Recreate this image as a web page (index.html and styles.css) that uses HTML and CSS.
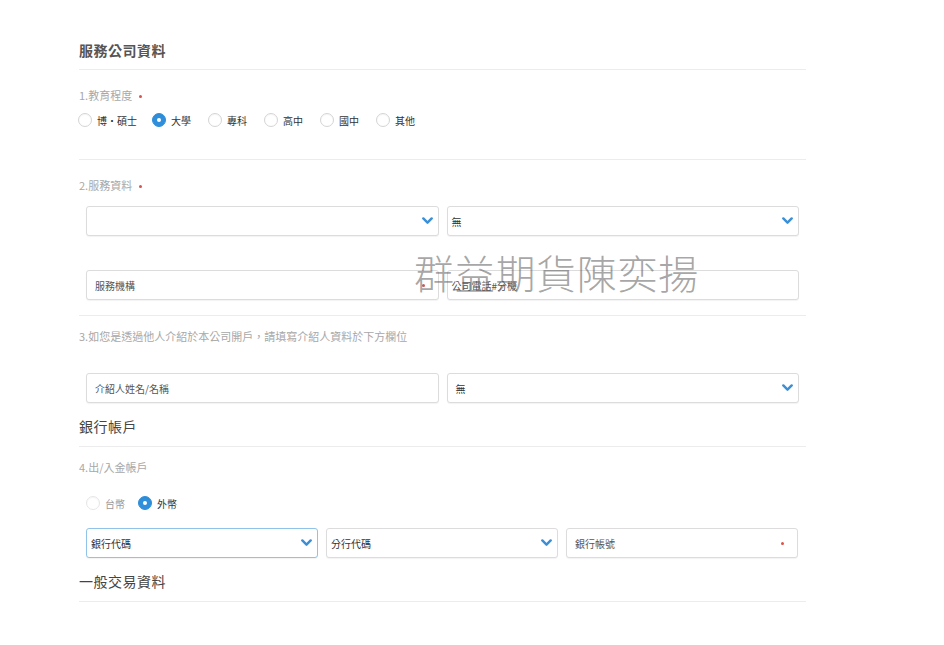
FILE: index.html
```html
<!DOCTYPE html>
<html lang="zh-Hant">
<head>
<meta charset="utf-8">
<link rel="stylesheet" href="styles.css">
</head>
<body>
<div class="page">
  <h2 class="section-title first">服務公司資料</h2>

  <div class="q q1">1.教育程度 <span class="req"></span></div>
  <div class="radios r1">
    <label class="radio"><span class="dot"></span>博・碩士</label>
    <label class="radio"><span class="dot on"></span>大學</label>
    <label class="radio"><span class="dot"></span>專科</label>
    <label class="radio"><span class="dot"></span>高中</label>
    <label class="radio"><span class="dot"></span>國中</label>
    <label class="radio"><span class="dot"></span>其他</label>
  </div>
  <div class="divider d1"></div>

  <div class="q q2">2.服務資料 <span class="req"></span></div>
  <div class="row two r-a">
    <div class="field select"><span class="val"></span><svg class="chev" viewBox="0 0 10 7"><path d="M1.2 1.2 L5 5 L8.8 1.2"/></svg></div>
    <div class="field select"><span class="val dark">無</span><svg class="chev" viewBox="0 0 10 7"><path d="M1.2 1.2 L5 5 L8.8 1.2"/></svg></div>
  </div>
  <div class="row two r-b">
    <div class="field input"><span class="ph pad">服務機構</span><span class="rdot"></span></div>
    <div class="field input"><span class="ph">公司電話#分機</span></div>
  </div>
  <div class="divider d2"></div>

  <div class="q q3">3.如您是透過他人介紹於本公司開戶，請填寫介紹人資料於下方欄位</div>
  <div class="row two r-c">
    <div class="field input"><span class="ph pad">介紹人姓名/名稱</span></div>
    <div class="field select"><span class="val dark pad">無</span><svg class="chev" viewBox="0 0 10 7"><path d="M1.2 1.2 L5 5 L8.8 1.2"/></svg></div>
  </div>

  <h2 class="section-title">銀行帳戶</h2>
  <div class="q q4">4.出/入金帳戶</div>
  <div class="radios r2">
    <label class="radio muted"><span class="dot faint"></span>台幣</label>
    <label class="radio"><span class="dot on"></span>外幣</label>
  </div>
  <div class="row three r-d">
    <div class="field select focus"><span class="val dark">銀行代碼</span><svg class="chev" viewBox="0 0 10 7"><path d="M1.2 1.2 L5 5 L8.8 1.2"/></svg></div>
    <div class="field select"><span class="val dark">分行代碼</span><svg class="chev" viewBox="0 0 10 7"><path d="M1.2 1.2 L5 5 L8.8 1.2"/></svg></div>
    <div class="field input"><span class="ph pad">銀行帳號</span><span class="rdot"></span></div>
  </div>

  <h2 class="section-title">一般交易資料</h2>
</div>
<div class="watermark">群益期貨陳奕揚</div>
</body>
</html>
```

FILE: styles.css
```css
* { box-sizing: border-box; }
html, body { margin: 0; padding: 0; background: #fff; }
body {
  font-family: "Noto Sans CJK TC", "Noto Sans", "Liberation Sans", sans-serif;
  color: #333;
  width: 944px;
  height: 645px;
  overflow: hidden;
  position: relative;
}
.page {
  margin-left: 79px;
  width: 727px;
}
.section-title {
  margin: 13px 0 0 0;
  font-size: 14px;
  line-height: 20px;
  font-weight: 400;
  color: #444;
  padding-bottom: 10px;
  border-bottom: 1px solid #ececec;
  letter-spacing: 0.5px;
}
.section-title.first { margin-top: 40px; padding-bottom: 9px; font-weight: 700; color: #555; }

.q {
  font-size: 11px;
  line-height: 16px;
  height: 16px;
  color: #a8a8a8;
  display: flex;
  align-items: center;
}
.req {
  display: inline-block;
  width: 3px; height: 3px;
  border-radius: 50%;
  background: #d9534f;
  margin-left: 7px;
  margin-top: 3px;
}
.q1 { margin-top: 17px; }
.q2 { margin-top: 17px; }
.q3 { margin-top: 12px; }
.q4 { margin-top: 12px; }

.radios { display: flex; height: 16px; align-items: center; }
.r1 { margin-top: 9px; margin-left: -1px; }
.r2 { margin-top: 20px; margin-left: 7px; }
.radio {
  display: flex;
  align-items: center;
  font-size: 10px;
  color: #333;
  width: 56px;
}
.r1 .radio:first-child { width: 74px; }
.r2 .radio { width: 52px; }
.radio.muted { color: #999; }
.dot {
  width: 14px; height: 14px;
  border-radius: 50%;
  border: 1px solid #d4d4d4;
  margin-right: 5px;
  flex: none;
  background: #fff;
  box-shadow: inset 0 1px 1px rgba(0,0,0,0.04);
}
.dot.faint { border-color: #e6e6e6; }
.dot.on {
  background: #2f8fdb;
  border-color: #2f8fdb;
  position: relative;
}
.dot.on::after {
  content: "";
  position: absolute;
  left: 4px; top: 4px;
  width: 4px; height: 4px;
  border-radius: 50%;
  background: #fff;
}

.divider { border-top: 1px solid #ececec; }
.d1 { margin-top: 31px; }
.d2 { margin-top: 15px; }

.row {
  display: grid;
  gap: 8px;
  margin-left: 7px;
  width: 713px;
}
.row.two { grid-template-columns: 1fr 1fr; }
.row.three { grid-template-columns: 232px 232px 232px; }
.r-a { margin-top: 13px; }
.r-b { margin-top: 34px; }
.r-c { margin-top: 29px; }
.r-d { margin-top: 17px; }

.field {
  height: 30px;
  border: 1px solid #dcdcdc;
  border-radius: 3px;
  background: #fff;
  display: flex;
  align-items: center;
  padding: 0 4px 0 4px;
  font-size: 10px;
  box-shadow: 0 1px 1px rgba(0,0,0,0.05);
}
.field.focus { border-color: #8fc3ea; }
.val { flex: 1; color: #333; }
.val.pad { padding-left: 4px; }
.ph { flex: 1; color: #555; }
.ph.pad { padding-left: 4px; }
.chev {
  width: 11px; height: 8px;
  margin-right: 1px;
  fill: none;
  stroke: #3a8fd6;
  stroke-width: 2.2;
  stroke-linecap: round;
  stroke-linejoin: round;
}
.rdot {
  width: 3px; height: 3px;
  border-radius: 50%;
  background: #d9534f;
  margin-right: 9px;
}

.watermark {
  position: absolute;
  left: 414px;
  top: 246px;
  font-size: 40px;
  line-height: 52px;
  font-weight: 300;
  color: rgba(90, 90, 90, 0.55);
  letter-spacing: 0.7px;
  white-space: nowrap;
  pointer-events: none;
}
```
